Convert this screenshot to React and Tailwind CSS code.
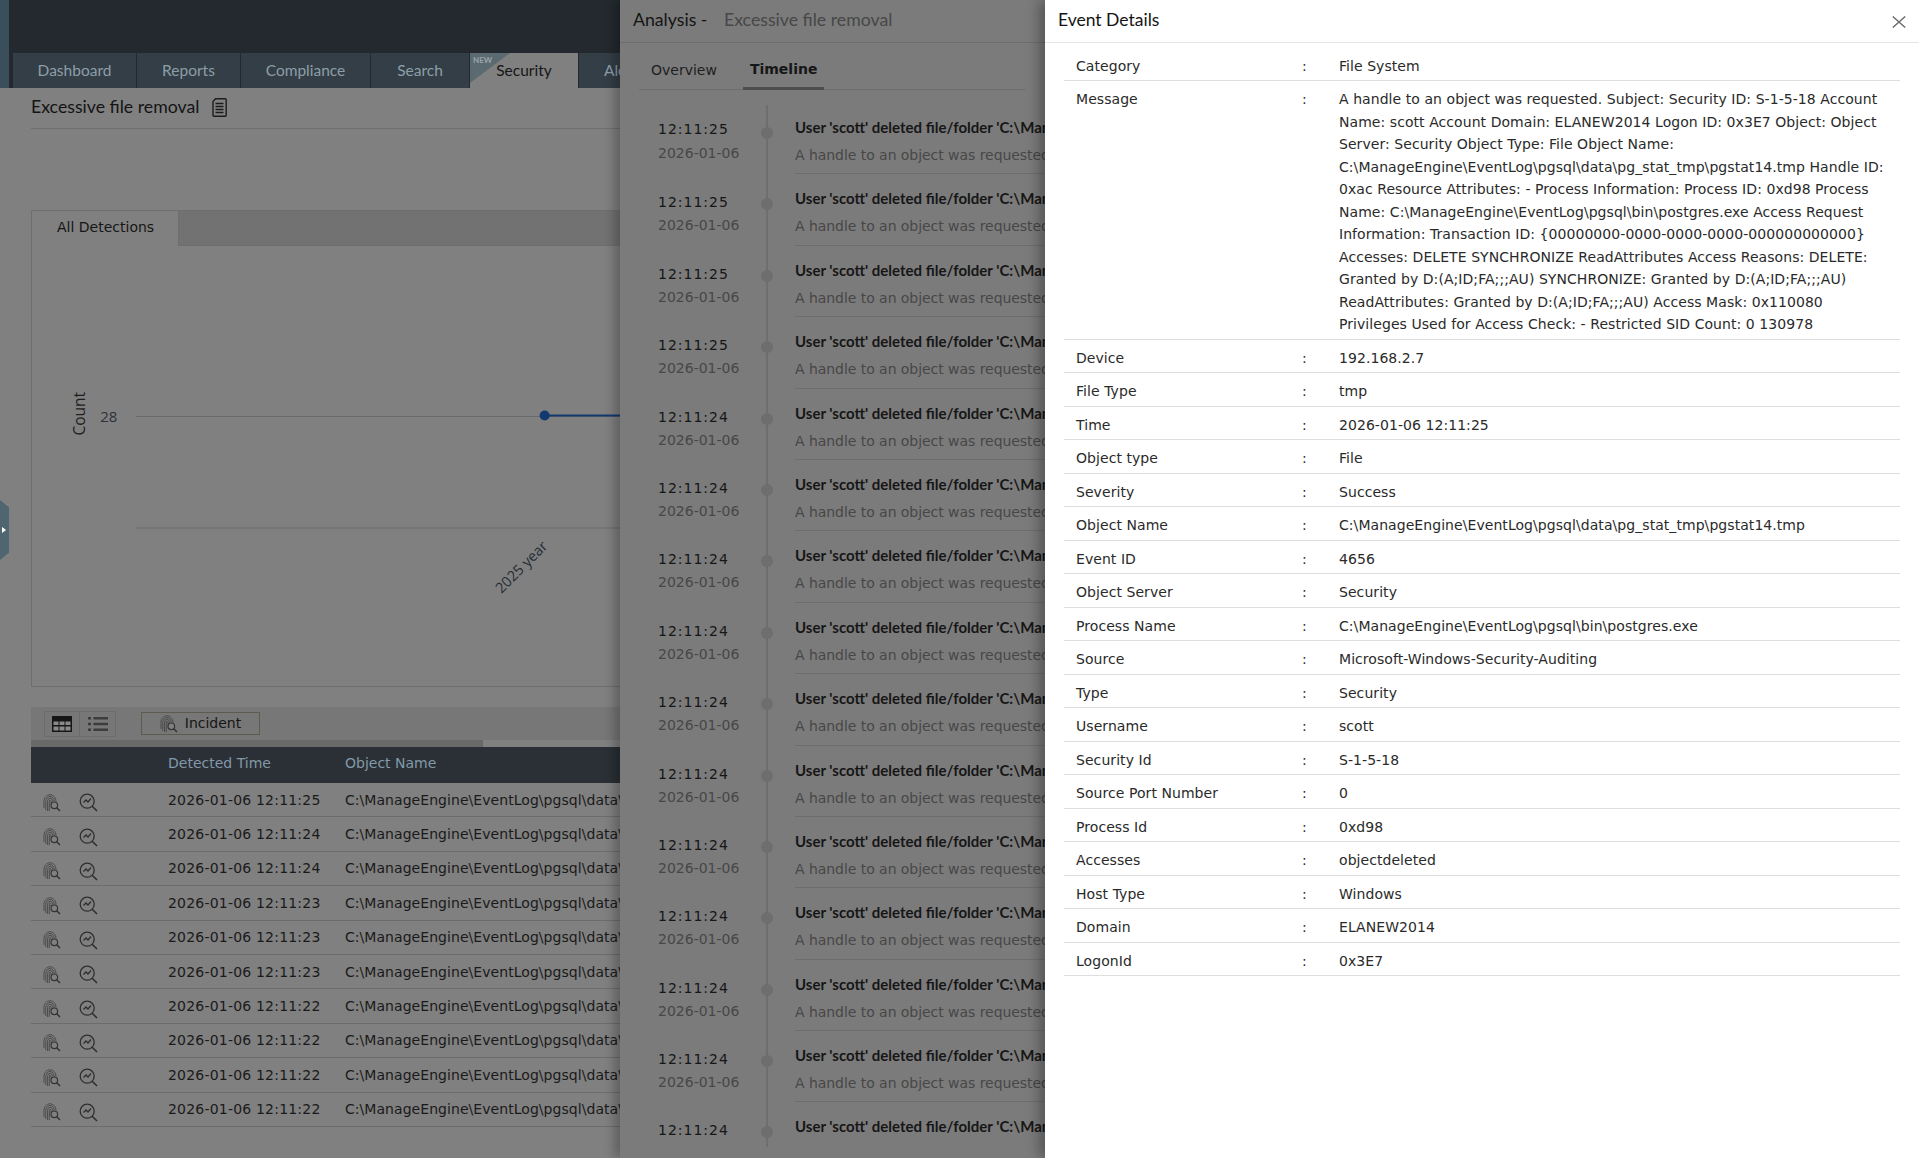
import React from "react";

const tabs = [["Dashboard", "w-[124px]"], ["Reports", "w-[104px]"], ["Compliance", "w-[130px]"], ["Search", "w-[99px]"]];
const times = ["25","24","24","23","23","23","22","22","22","22"];
const tl = ["25","25","25","25","24","24","24","24","24","24","24","24","24","24","24"];
const details = [
  ["Category","File System"],
  ["Message","A handle to an object was requested. Subject: Security ID: S-1-5-18 Account Name: scott Account Domain: ELANEW2014 Logon ID: 0x3E7 Object: Object Server: Security Object Type: File Object Name: C:\\ManageEngine\\EventLog\\pgsql\\data\\pg_stat_tmp\\pgstat14.tmp Handle ID: 0xac Resource Attributes: - Process Information: Process ID: 0xd98 Process Name: C:\\ManageEngine\\EventLog\\pgsql\\bin\\postgres.exe Access Request Information: Transaction ID: {00000000-0000-0000-0000-000000000000} Accesses: DELETE SYNCHRONIZE ReadAttributes Access Reasons: DELETE: Granted by D:(A;ID;FA;;;AU) SYNCHRONIZE: Granted by D:(A;ID;FA;;;AU) ReadAttributes: Granted by D:(A;ID;FA;;;AU) Access Mask: 0x110080 Privileges Used for Access Check: - Restricted SID Count: 0 130978"],
  ["Device","192.168.2.7"],["File Type","tmp"],["Time","2026-01-06 12:11:25"],["Object type","File"],["Severity","Success"],
  ["Object Name","C:\\ManageEngine\\EventLog\\pgsql\\data\\pg_stat_tmp\\pgstat14.tmp"],["Event ID","4656"],["Object Server","Security"],
  ["Process Name","C:\\ManageEngine\\EventLog\\pgsql\\bin\\postgres.exe"],["Source","Microsoft-Windows-Security-Auditing"],["Type","Security"],
  ["Username","scott"],["Security Id","S-1-5-18"],["Source Port Number","0"],["Process Id","0xd98"],["Accesses","objectdeleted"],
  ["Host Type","Windows"],["Domain","ELANEW2014"],["LogonId","0x3E7"],
];

function Finger() {
  return (
    <svg viewBox="0 0 18 18" className="w-[18px] h-[18px] shrink-0" fill="none">
      <g stroke="#4a4a4a" strokeWidth="1">
        <path d="M1 14V7.500C1 3.500 3.700 .8 7 .8s6 2.700 6 6.700" />
        <path d="M2.800 16V7.500C2.800 4.700 4.600 2.500 7 2.500s4.200 2.200 4.200 5" />
        <path d="M4.600 17V7.500C4.600 5.800 5.500 4.300 7 4.300s2.600 1.500 2.600 3.200" />
        <path d="M6.300 17V7.500C6.300 6.800 6.500 6 7 6s1 .8 1 1.500v2" />
      </g>
      <circle cx="11.300" cy="11.300" r="3.300" fill="#808080" stroke="#333333" strokeWidth="1.200" />
      <path d="M13.700 13.700 17 17" stroke="#333333" strokeWidth="1.500" />
    </svg>
  );
}
function Zoom() {
  return (
    <svg viewBox="0 0 19 19" className="w-[19px] h-[19px] text-[#2e2e2e]" fill="none" stroke="currentColor" strokeWidth="1.3"><circle cx="8.200" cy="8.200" r="7" /><path d="M13.200 13.200 18 18" strokeWidth="1.600" /><path d="M4.500 9.500 7 7l2 2 3-3.500" /></svg>
  );
}
function Grid() {
  return (
    <svg viewBox="0 0 20 16" className="w-5 h-4" fill="none"><rect x="0" y="0" width="20" height="16" fill="#161616" /><path d="M1.500 5.500h5v3.500h-5zM7.500 5.500h5v3.500h-5zM13.500 5.500h5v3.500h-5zM1.500 10.500h5v4h-5zM7.500 10.500h5v4h-5zM13.500 10.500h5v4h-5z" fill="#8a8a8a" /></svg>
  );
}
function Bullets() {
  return (
    <svg viewBox="0 0 20 14" className="w-5 h-[14px]" fill="#3c3c3c"><path d="M0 0h3v2.400H0zM0 5.800h3v2.400H0zM0 11.600h3V14H0zM5.500 0H20v2.400H5.500zM5.500 5.800H20v2.400H5.500zM5.500 11.600H20V14H5.500z" /></svg>
  );
}
function Doc() {
  return (
    <svg viewBox="0 0 15 19" className="w-[15px] h-[19px]" fill="none" stroke="#1c1c1c" strokeWidth="1.400"><path d="M3.500 .8H13.200c.6 0 1 .4 1 1V17.200c0 .6-.4 1-1 1H2c-.6 0-1-.4-1-1V3.500z" /><path d="M3.500 5.500h8M3.500 8.500h8M3.500 11.500h8M3.500 14.500h8" strokeWidth="1.300" /></svg>
  );
}

function Page() {
  return (
    <div className="w-full h-[1158px] flex bg-[#808080] overflow-hidden">
      <div className="w-[9px] shrink-0 flex flex-col">
        <div className="h-[88px] bg-[#3a4f5b]" />
        <div className="h-[412px]" />
        <div className="h-[60px] bg-[#4f6670] flex items-center justify-start [clip-path:polygon(0_0,100%_12%,100%_88%,0_100%)]">
          <div className="ml-[2px] w-0 h-0 border-y-[3px] border-y-transparent border-l-[4px] border-l-white" />
        </div>
      </div>
      <div className="flex-1 min-w-0 flex flex-col">
        <div className="h-[53px] bg-[#23292e]" />
        <div className="h-[35px] bg-[#23292e] flex pl-[4px] font-['Lato',sans-serif] text-[15.5px] text-[#8c9ea9]">
          {tabs.map(([t, w]) => (
            <div key={t} className={`${w} bg-[#343e46] border-r border-[#23292e] flex items-center justify-center`}>{t}</div>
          ))}
          <div className="relative w-[108px] bg-[#808080] text-[#161616] flex items-center justify-center">
            Security
            <div className="absolute left-0 top-0 w-[40px] h-[30px] bg-[#5b6a70] [clip-path:polygon(0_0,100%_0,0_100%)]" />
            <span className="absolute left-[3px] top-[2px] text-[8px] font-bold leading-[10px] text-[#9aa5aa]">NEW</span>
          </div>
          <div className="w-[110px] ml-px bg-[#343e46] flex items-center pl-[25px]">Alerts</div>
        </div>
        <div className="pl-[22px] pr-0 flex-1 flex flex-col">
          <div className="h-[41px] pb-[1px] border-b border-[#6f6f6f] flex items-center gap-[13px] font-['Lato',sans-serif] text-[17.7px] text-[#141414]">
            Excessive file removal <Doc />
          </div>
          <div className="mt-[81px] h-[477px] border border-[#6e6e6e] flex flex-col">
            <div className="h-[35px] bg-[#727272] flex border-b border-[#6e6e6e]">
              <div className="w-[147px] h-[35px] pb-[2px] bg-[#808080] border-r border-[#6e6e6e] flex items-center pl-[25px] font-['DejaVu_Sans',sans-serif] text-[14px] text-[#161616]">All Detections</div>
            </div>
            <svg className="flex-1 w-full" viewBox="0 0 1880 441" preserveAspectRatio="xMinYMin slice">
              <text transform="translate(53 170) rotate(-90) translate(-19 0)" fontFamily="'Open Sans',sans-serif" fontSize="15.500" fill="#1e1e1e">Count</text>
              <text x="68" y="175" fontFamily="'Open Sans',sans-serif" fontSize="15" fill="#2b333a">28</text>
              <path d="M104 170H600M104 281H600" stroke="#6a6a6a" strokeWidth="1" />
              <circle cx="511" cy="169" r="5" fill="#123a70" />
              <path d="M511 169H600" stroke="#123a70" strokeWidth="2" />
              <text transform="translate(468 347) rotate(-45)" fontFamily="'Open Sans',sans-serif" fontSize="14.500" fill="#242c33">2025 year</text>
            </svg>
          </div>
          <div className="mt-[20px] h-[33px] bg-[#777777] flex items-center pl-[13px]">
            <div className="flex h-[26px] border border-[#6c6c6c]">
              <div className="w-[35px] border-r border-[#6c6c6c] flex items-center justify-center"><Grid /></div>
              <div className="w-[35px] flex items-center justify-center"><Bullets /></div>
            </div>
            <div className="ml-[25px] w-[119px] h-[23px] border border-[#5f5a50] flex items-center justify-center gap-[7px] font-['DejaVu_Sans',sans-serif] text-[14px] text-[#161616]">
              <Finger /> Incident
            </div>
          </div>
          <div className="h-[7px] bg-[#808080] flex"><div className="w-[452px] bg-[#696969]" /></div>
          <div className="h-[36px] pb-[3px] bg-[#2a3035] flex items-center pl-[137px] font-['DejaVu_Sans',sans-serif] text-[14px] text-[#8398a8]">
            <span className="w-[177px]">Detected Time</span><span>Object Name</span>
          </div>
          {times.map((s, i) => (
            <div key={i} className="h-[34.4px] shrink-0 pt-[1px] border-b border-[#6c6c6c] flex items-center font-['DejaVu_Sans',sans-serif] text-[14px] text-[#1a1a1a] whitespace-nowrap">
              <div className="w-[137px] flex items-center gap-[18px] pl-[12px] pt-[5px]"><Finger /><Zoom /></div>
              <span className="w-[177px] tracking-[0.2px]">2026-01-06 12:11:{s}</span>
              <span className="tracking-[0.05px]">C:\ManageEngine\EventLog\pgsql\data\pg_stat_tmp\pgstat14.tmp</span>
            </div>
          ))}
        </div>
      </div>
    </div>
  );
}

function Analysis() {
  return (
    <div className="absolute left-[620px] top-0 h-[1158px] w-[425px] bg-[#7b7b7b] shadow-[-6px_0_10px_rgba(0,0,0,0.25)] flex flex-col">
      <div className="h-[43px] pb-[1px] shrink-0 border-b border-[#6e6e6e] flex items-center pl-[13px] font-['Lato',sans-serif] text-[17.7px] whitespace-nowrap">
        <span className="w-[91px] text-[#141414]">Analysis -</span><span className="text-[#474747]">Excessive file removal</span>
      </div>
      <div className="mx-[19px] h-[47px] shrink-0 border-b border-[#6e6e6e] flex items-end font-['DejaVu_Sans',sans-serif] text-[14px]">
        <span className="ml-[12px] mb-[8px] text-[#1f1f1f]">Overview</span>
        <span className="ml-[26px] px-[7px] pb-[7px] border-b-[3px] border-[#4e4e4e] -mb-px font-bold text-[#161616]">Timeline</span>
      </div>
      <div className="relative flex-1 min-h-0 mb-[11px] pt-[13px] overflow-hidden">
        <div className="absolute left-[146px] top-[15px] bottom-0 w-[2px] bg-[#6e6e6e]" />
        {tl.map((s, i) => (
          <div key={i} className="relative h-[71.4px] pl-[38px] flex whitespace-nowrap">
            <div className={`w-[103px] font-['DejaVu_Sans',sans-serif] ${i === 0 ? "pt-[16px]" : "pt-[18px]"}`}>
              <div className="text-[14px] leading-[20px] tracking-[1px] text-[#161616]">12:11:{s}</div>
              <div className={`text-[14px] leading-[20px] text-[#474747] ${i === 0 ? "mt-[4px]" : "mt-[3px]"}`}>2026-01-06</div>
            </div>
            <div className="mt-[24px] w-[12px] h-[12px] rounded-full bg-[#6e6e6e]" />
            <div className="ml-[22px] flex-1 min-w-0 overflow-hidden border-b border-[#6e6e6e] pt-[14px]">
              <div className="font-['Lato',sans-serif] font-bold text-[15px] leading-[20px] text-[#161616]">User 'scott' deleted file/folder 'C:\ManageEngine\EventLog\pgsql</div>
              <div className="mt-[8px] font-['DejaVu_Sans',sans-serif] text-[14px] tracking-[-0.05px] leading-[20px] text-[#474747]">A handle to an object was requested. Subject</div>
            </div>
          </div>
        ))}
      </div>
    </div>
  );
}

function Details() {
  return (
    <div className="absolute left-[1045px] top-0 h-[1158px] w-[874px] bg-white shadow-[-6px_0_12px_rgba(0,0,0,0.3)] flex flex-col">
      <div className="h-[43px] pb-[1px] shrink-0 border-b border-[#e4e4e4] flex items-center justify-between pl-[13px] pr-[13px] font-['Lato',sans-serif] text-[17.5px] text-[#141414]">
        Event Details
        <svg viewBox="0 0 14 12" className="w-[14px] h-[12px] mt-[3px]" fill="none" stroke="#6a6a6a" strokeWidth="1.400"><path d="M.8 .5 13.200 11.500M13.200 .5 .8 11.500" /></svg>
      </div>
      <div className="mt-[4.5px] ml-[19px] mr-[19px] font-['DejaVu_Sans',sans-serif] text-[14px] tracking-[0.06px] leading-[22.5px] text-[#2a2a2a]">
        {details.map(([k, v]) => (
          <div key={k} className="flex border-b border-[#dedede] pt-[7px] pb-[3px]">
            <div className="w-[238px] pl-[12px] shrink-0">{k}</div>
            <div className="w-[37px] shrink-0">:</div>
            <div className="flex-1 min-w-0 pr-[10px]">{v}</div>
          </div>
        ))}
      </div>
    </div>
  );
}

export default function App() {
  return (
    <div className="relative w-full h-[1158px] overflow-hidden">
      <Page />
      <Analysis />
      <Details />
    </div>
  );
}
